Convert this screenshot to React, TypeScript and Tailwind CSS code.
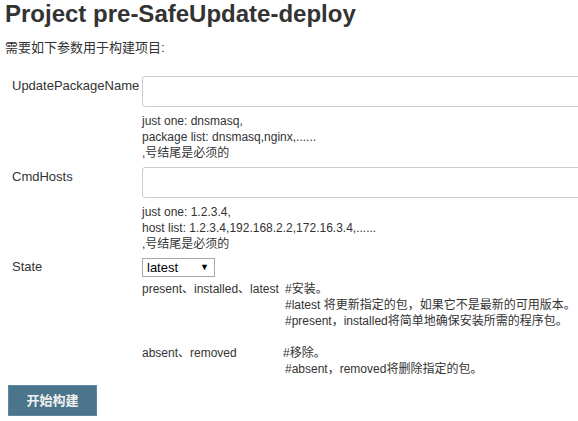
import React from 'react';

const HelpLines = ({ lines }: { lines: string[] }) => (
  <div className="mt-[6px] text-[12px] leading-4">
    {lines.map((l, i) => (
      <div key={i}>{l}</div>
    ))}
  </div>
);

const App = () => {
  return (
    <div className="w-full min-h-screen overflow-hidden bg-white text-[#333] font-['Liberation_Sans','Noto_Sans_CJK_SC',sans-serif]">
      {/* Header */}
      <h1 className="pl-[5px] text-[24px] font-bold leading-[27px]">Project pre-SafeUpdate-deploy</h1>
      <div className="pl-[5px] mt-[13px] text-[13px] leading-4">需要如下参数用于构建项目:</div>

      {/* Parameters */}
      <div className="mt-5 pl-3 flex flex-col gap-[6px]">
        <div className="grid grid-cols-[130px_1fr]">
          <div className="pt-[2px] text-[13px] leading-4 whitespace-nowrap">UpdatePackageName</div>
          <div>
            <input
              type="text"
              className="block w-[480px] h-[31px] border border-[#ccc] rounded-[3px] bg-white outline-none"
            />
            <HelpLines lines={['just one: dnsmasq,', 'package list: dnsmasq,nginx,......', ',号结尾是必须的']} />
          </div>
        </div>

        <div className="grid grid-cols-[130px_1fr]">
          <div className="pt-[2px] text-[13px] leading-4 whitespace-nowrap">CmdHosts</div>
          <div>
            <input
              type="text"
              className="block w-[480px] h-[31px] border border-[#ccc] rounded-[3px] bg-white outline-none"
            />
            <HelpLines lines={['just one: 1.2.3.4,', 'host list: 1.2.3.4,192.168.2.2,172.16.3.4,......', ',号结尾是必须的']} />
          </div>
        </div>

        <div className="grid grid-cols-[130px_1fr]">
          <div className="pt-[1px] text-[13px] leading-4">State</div>
          <div>
            <div className="flex items-center justify-between w-[73px] h-[19px] border border-[#a9a9a9] bg-white pl-[4px] pr-[5px] text-black">
              <span className="text-[13px] leading-[15px]">latest</span>
              <span className="text-[9px] leading-[11px]">▼</span>
            </div>
            <div className="mt-[4px] grid grid-cols-[143px_auto] text-[12px] leading-4 whitespace-nowrap">
              <div>present、installed、latest</div>
              <div>#安装。</div>
              <div />
              <div>#latest 将更新指定的包，如果它不是最新的可用版本。</div>
              <div />
              <div>#present，installed将简单地确保安装所需的程序包。</div>
              <div className="h-4" />
              <div className="h-4" />
              <div>absent、removed</div>
              <div className="-ml-[2px]">#移除。</div>
              <div />
              <div>#absent，removed将删除指定的包。</div>
            </div>
          </div>
        </div>
      </div>

      {/* Submit */}
      <div className="pl-2 mt-2">
        <button className="w-[89px] h-[31px] bg-[#4b758b] border border-[#5a8aa1] text-[#f0f0f0] text-[13px] font-bold">
          开始构建
        </button>
      </div>
    </div>
  );
};

export default App;
